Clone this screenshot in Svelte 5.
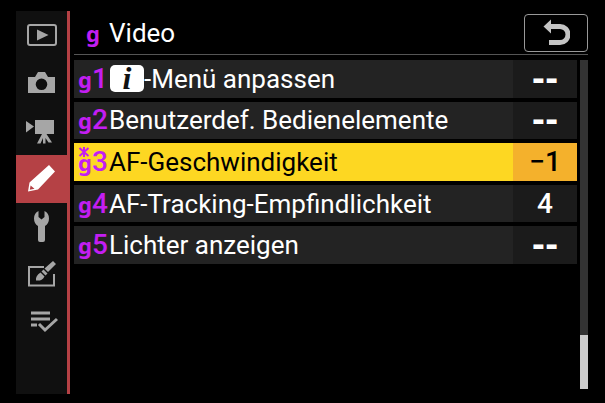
<script lang="ts">
    type Tab = 'playback' | 'photo' | 'video' | 'custom' | 'setup' | 'retouch' | 'mymenu';

    const tabs: { id: Tab; label: string }[] = [
        { id: 'playback', label: 'Wiedergabe' },
        { id: 'photo', label: 'Fotoaufnahme' },
        { id: 'video', label: 'Videoaufnahme' },
        { id: 'custom', label: 'Individualfunktionen' },
        { id: 'setup', label: 'System' },
        { id: 'retouch', label: 'Bildbearbeitung' },
        { id: 'mymenu', label: 'Mein Menü' }
    ];

    const items = [
        { nr: 1, label: '-Menü anpassen', value: '--', info: true },
        { nr: 2, label: 'Benutzerdef. Bedienelemente', value: '--' },
        { nr: 3, label: 'AF-Geschwindigkeit', value: '−1', changed: true },
        { nr: 4, label: 'AF-Tracking-Empfindlichkeit', value: '4' },
        { nr: 5, label: 'Lichter anzeigen', value: '--' }
    ];

    let activeTab = $state<Tab>('custom');
    let selected = $state(3);
</script>

<div class="screen">
    <nav class="tabs">
        {#each tabs as tab (tab.id)}
            <button
                class="tab"
                class:active={activeTab === tab.id}
                aria-label={tab.label}
                onclick={() => (activeTab = tab.id)}
            >
                <svg viewBox="0 0 32 32" width="32" height="32" aria-hidden="true">
                    {#if tab.id === 'playback'}
                        <rect x="2" y="6" width="28" height="20" rx="2" fill="none" stroke="currentColor" stroke-width="2" />
                        <path d="M11 10.500L22.500 16L11 21.500z" fill="currentColor" />
                    {:else if tab.id === 'photo'}
                        <path fill="currentColor" fill-rule="evenodd" d="M2 10h7l3-5h7l3 5h7v16H2zM15.500 11.500a5.800 5.800 0 1 0 0 11.600a5.800 5.800 0 0 0 0-11.600z" />
                    {:else if tab.id === 'video'}
                        <path fill="currentColor" d="M0 6l8 5.500L0 17.500zM9 5h19v14h-7.500l5.500 8.500h-3.500L19.500 23v5.500h-2.500V23l-2.500 5.500H11L16 19H9z" />
                    {:else if tab.id === 'custom'}
                        <path fill="currentColor" fill-rule="evenodd" d="M23 2L29 8.500 12 26.500 2 28.500 3.500 19.500zM4.600 22.500L3.800 26.800 8.500 25.800z" />
                    {:else if tab.id === 'setup'}
                        <path fill="currentColor" d="M12.500 0v6l3 2.500 3-2.500V0c3 1.500 4.500 4 4.500 7.500 0 3.500-1.500 6-4 7.500V29q0 2-2 2h-3q-2 0-2-2V15c-2.500-1.500-4-4-4-7.500 0-3.500 1.500-6 4.500-7.500z" />
                    {:else if tab.id === 'retouch'}
                        <path d="M18 8H3v18.500h25V15" fill="none" stroke="currentColor" stroke-width="2" />
                        <path fill="currentColor" d="M27 2l3 3-8 8-3.500-3.500zM17.500 10.500l4 4-2 2-4-4zM14.500 13.500l4 4c-2 3.500-4.500 4.500-8.500 4-.500-3 1-6 4.500-8z" />
                    {:else}
                        <path d="M5 6h19M5 12h19M5 18h6" stroke="currentColor" stroke-width="3" />
                        <path d="M13 17l6 6L31 12" fill="none" stroke="currentColor" stroke-width="3" />
                    {/if}
                </svg>
            </button>
        {/each}
    </nav>

    <main class="menu">
        <header>
            <h1><span class="group">g</span>Video</h1>
            <button class="back" aria-label="Zurück">
                <svg viewBox="0 0 28 28" width="28" height="28" aria-hidden="true">
                    <path d="M8 7.500h10a7.500 7.500 0 0 1 0 16H7" fill="none" stroke="currentColor" stroke-width="5" />
                    <path d="M1.500 7.500L9 0.500v14z" fill="currentColor" />
                </svg>
            </button>
        </header>

        <div class="body">
            <ul>
                {#each items as item (item.nr)}
                    <li>
                        <button class="row" class:selected={selected === item.nr} onclick={() => (selected = item.nr)}>
                            <span class="code">
                                {#if item.changed}
                                    <svg class="mark" viewBox="0 0 12 10" width="12" height="10" aria-label="geändert">
                                        <path d="M6 0v10M1.500 1l9 8M10.500 1l-9 8" stroke="currentColor" stroke-width="2" />
                                    </svg>
                                {/if}
                                <span class="letter">g</span><span class="digit">{item.nr}</span>
                            </span>
                            <span class="label">
                                {#if item.info}<span class="info">i</span>{/if}{item.label}
                            </span>
                            <span class="value" class:unset={item.value === '--'}>{item.value}</span>
                        </button>
                    </li>
                {/each}
            </ul>
            <div class="scrollbar"><div class="thumb"></div></div>
        </div>
    </main>
</div>

<style>
    :global(body) {
        background: #000;
    }

    .screen {
        display: flex;
        box-sizing: border-box;
        min-height: 100vh;
        padding: 11px 17px 9px 16px;
        background: #000;
        color: #fff;
        font-family: Roboto, 'Noto Sans', sans-serif;
        font-size: 26px;
    }

    button {
        margin: 0;
        padding: 0;
        border: 0;
        background: none;
        color: inherit;
        font: inherit;
        cursor: pointer;
    }

    .tabs {
        display: flex;
        flex-direction: column;
        flex: none;
        width: 51px;
        border-right: 3px solid #b54145;
        background: #101010;
        color: #a6a6a6;
    }

    .tab {
        display: flex;
        align-items: center;
        justify-content: center;
        height: 48px;
    }

    .tab.active {
        background: #b54145;
        color: #fff;
    }

    .menu {
        display: flex;
        flex-direction: column;
        flex: 1;
        min-width: 0;
        padding-left: 4px;
    }

    header {
        display: flex;
        align-items: center;
        justify-content: space-between;
        height: 43px;
        border-bottom: 1px solid #555;
    }

    h1 {
        display: flex;
        align-items: center;
        margin: 0;
        font-size: 26px;
        font-weight: 400;
    }

    .group {
        width: 23px;
        padding-left: 12px;
        color: #c31ef2;
        font-family: 'Noto Sans', sans-serif;
        font-size: 22px;
        font-weight: 700;
    }

    .back {
        display: flex;
        align-items: center;
        justify-content: center;
        box-sizing: border-box;
        width: 64px;
        height: 38px;
        border: 1px solid #999;
        border-radius: 4px;
        color: #c4c4c4;
    }

    .body {
        display: flex;
        flex: 1;
        gap: 3px;
        padding: 5px 0;
    }

    ul {
        display: grid;
        grid-auto-rows: 1fr;
        gap: 4px;
        flex: 1;
        align-self: flex-start;
        min-width: 0;
        min-height: 204px;
        margin: 0;
        padding: 0;
        list-style: none;
    }

    li {
        display: flex;
        min-width: 0;
    }

    .row {
        display: flex;
        align-items: stretch;
        width: 100%;
        background: #232323;
        line-height: 36px;
        text-align: left;
        white-space: nowrap;
    }

    .code {
        position: relative;
        display: flex;
        align-items: center;
        flex: none;
        width: 35px;
        padding-left: 4px;
        box-sizing: border-box;
        color: #c31ef2;
        font-weight: 700;
    }

    .letter {
        width: 14px;
        font-family: 'Noto Sans', sans-serif;
        font-size: 22px;
    }

    .digit {
        font-size: 28px;
        font-weight: 500;
    }

    /* sits above the g when a setting differs from its default */
    .mark {
        position: absolute;
        top: 4px;
        left: 4px;
    }

    .label {
        display: flex;
        align-items: center;
        flex: 1;
        min-width: 0;
    }

    .info {
        width: 34px;
        height: 27px;
        margin-left: 1px;
        border-radius: 5px;
        background: #fff;
        color: #111;
        font-family: 'Liberation Serif', serif;
        font-size: 32px;
        font-style: italic;
        font-weight: 700;
        line-height: 26px;
        text-align: center;
    }

    .value {
        display: flex;
        align-items: center;
        justify-content: center;
        flex: none;
        width: 64px;
        background: #1b1b1b;
        font-size: 28px;
        font-weight: 500;
    }

    .value.unset {
        font-family: 'DejaVu Sans', sans-serif;
        font-size: 32px;
        font-weight: 700;
    }

    .selected {
        background: #fdd722;
        color: #000;
    }

    .selected .value {
        background: #f4b12c;
    }

    .scrollbar {
        display: flex;
        align-items: flex-end;
        flex: none;
        width: 8px;
        background: #333;
    }

    .thumb {
        width: 100%;
        height: 54px;
        background: #ccc;
    }
</style>
